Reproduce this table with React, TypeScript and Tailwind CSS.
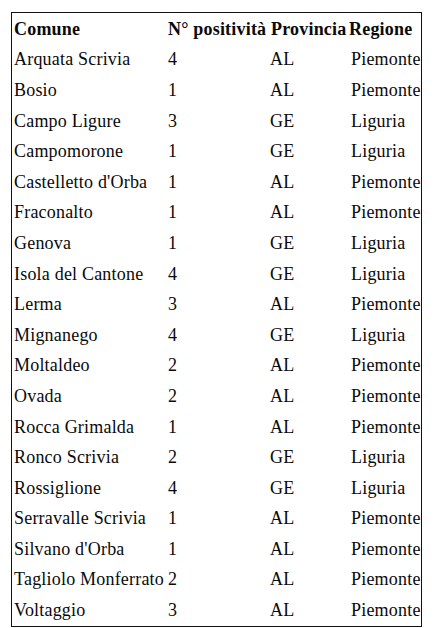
import React from 'react';

const comuni = [
  { nome: 'Arquata Scrivia', positivi: 4, provincia: 'AL', regione: 'Piemonte' },
  { nome: 'Bosio', positivi: 1, provincia: 'AL', regione: 'Piemonte' },
  { nome: 'Campo Ligure', positivi: 3, provincia: 'GE', regione: 'Liguria' },
  { nome: 'Campomorone', positivi: 1, provincia: 'GE', regione: 'Liguria' },
  { nome: "Castelletto d'Orba", positivi: 1, provincia: 'AL', regione: 'Piemonte' },
  { nome: 'Fraconalto', positivi: 1, provincia: 'AL', regione: 'Piemonte' },
  { nome: 'Genova', positivi: 1, provincia: 'GE', regione: 'Liguria' },
  { nome: 'Isola del Cantone', positivi: 4, provincia: 'GE', regione: 'Liguria' },
  { nome: 'Lerma', positivi: 3, provincia: 'AL', regione: 'Piemonte' },
  { nome: 'Mignanego', positivi: 4, provincia: 'GE', regione: 'Liguria' },
  { nome: 'Moltaldeo', positivi: 2, provincia: 'AL', regione: 'Piemonte' },
  { nome: 'Ovada', positivi: 2, provincia: 'AL', regione: 'Piemonte' },
  { nome: 'Rocca Grimalda', positivi: 1, provincia: 'AL', regione: 'Piemonte' },
  { nome: 'Ronco Scrivia', positivi: 2, provincia: 'GE', regione: 'Liguria' },
  { nome: 'Rossiglione', positivi: 4, provincia: 'GE', regione: 'Liguria' },
  { nome: 'Serravalle Scrivia', positivi: 1, provincia: 'AL', regione: 'Piemonte' },
  { nome: "Silvano d'Orba", positivi: 1, provincia: 'AL', regione: 'Piemonte' },
  { nome: 'Tagliolo Monferrato', positivi: 2, provincia: 'AL', regione: 'Piemonte' },
  { nome: 'Voltaggio', positivi: 3, provincia: 'AL', regione: 'Piemonte' },
];

const rowClass = 'grid grid-cols-[154px_104px_75px_1fr] h-[30.6px] items-center whitespace-nowrap';

const App = () => {
  return (
    <div className="min-h-screen bg-white pt-[12px] pl-[11px] text-[#0a0a0a] font-['Liberation_Serif','Times_New_Roman',serif] text-[18px] tracking-[0.2px]">
      <div className="w-[411px] border border-[#111] pt-[1px]">
        {/* Header */}
        <div className={`${rowClass} font-bold`}>
          <div className="pl-[2px]">Comune</div>
          <div className="pl-[2px]">N° positività</div>
          <div className="pl-[1px]">Provincia</div>
          <div className="pl-[4px]">Regione</div>
        </div>

        {/* Righe */}
        {comuni.map((c) => (
          <div key={c.nome} className={rowClass}>
            <div className="pl-[2px]">{c.nome}</div>
            <div className="pl-[2px]">{c.positivi}</div>
            <div>{c.provincia}</div>
            <div className="pl-[6px]">{c.regione}</div>
          </div>
        ))}
      </div>
    </div>
  );
};

export default App;
